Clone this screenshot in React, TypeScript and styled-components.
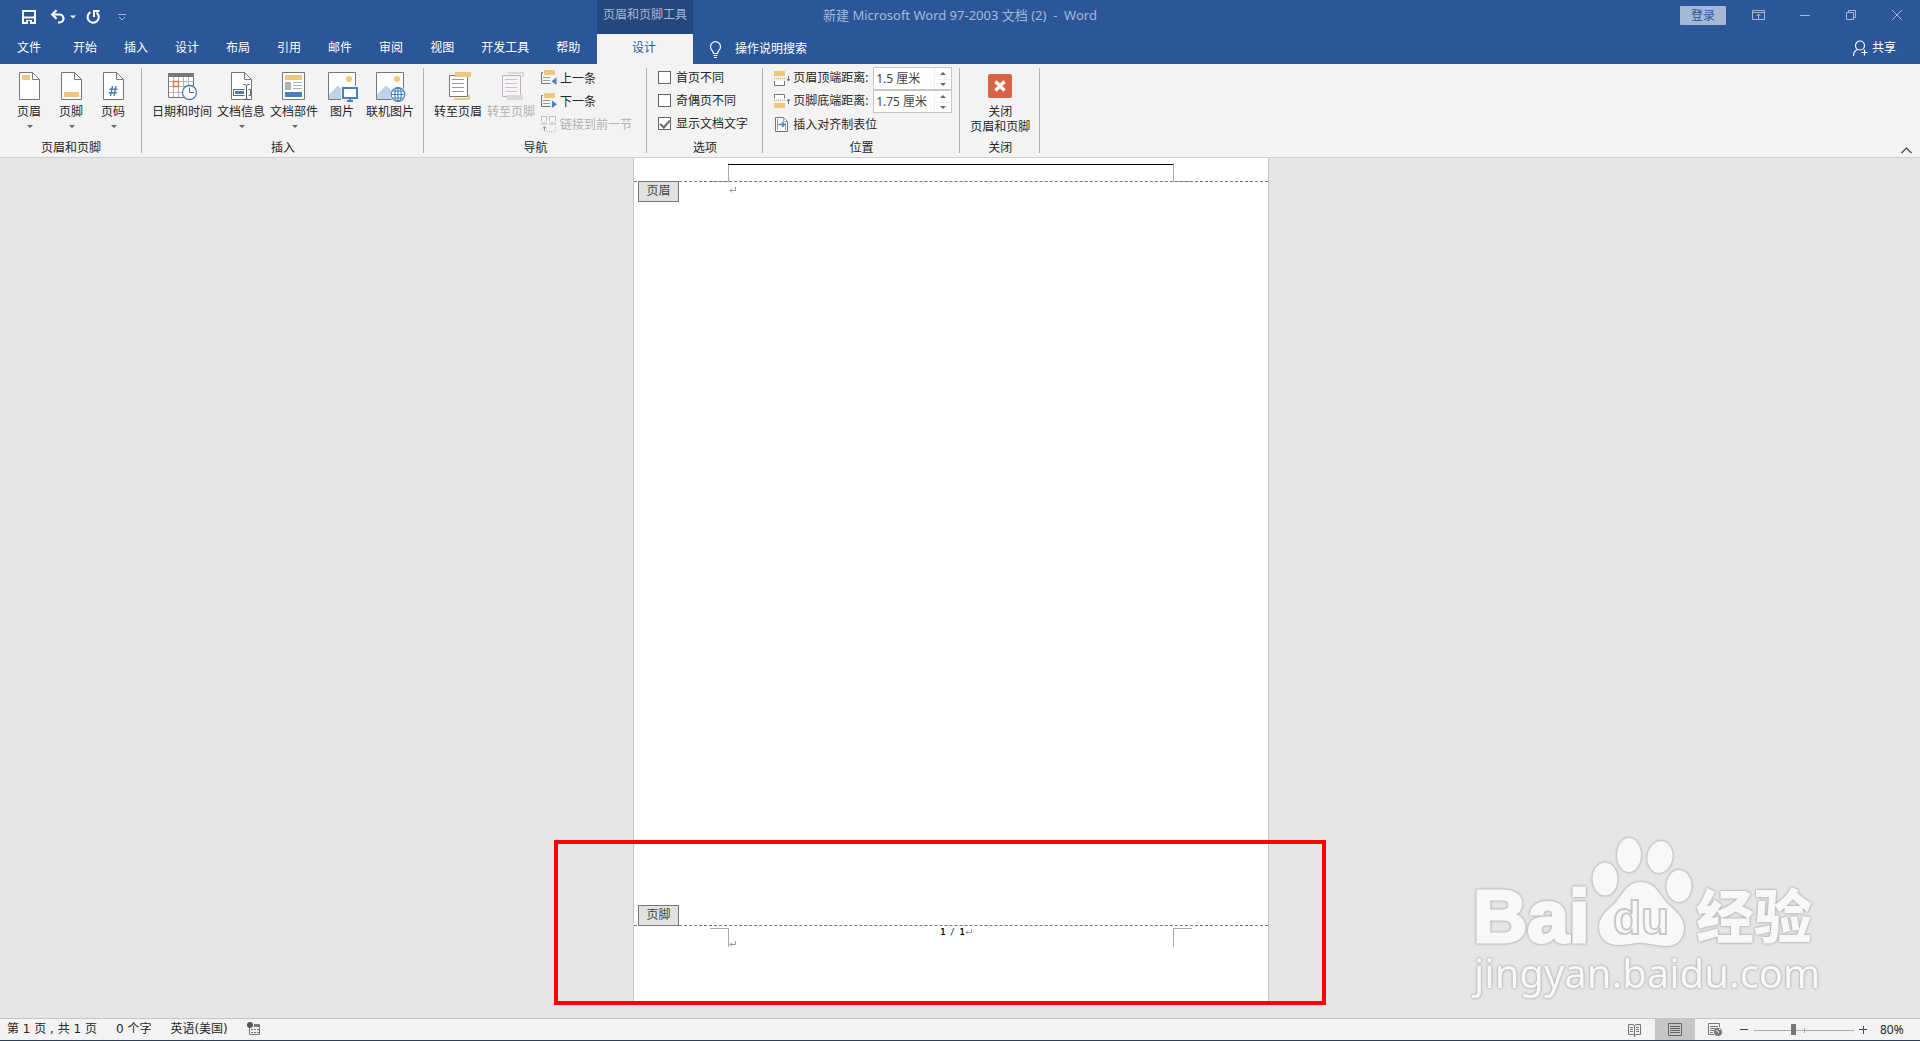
import React from 'react';
import styled, { createGlobalStyle } from 'styled-components';

const C = {
  blue: '#2b579a',
  blueDark: '#24477d',
  pale: '#a6b8d5',
  ribbon: '#f3f3f3',
  canvas: '#e6e6e6',
  line: '#c6c6c6',
  ink: '#262626',
  icon: '#777777',
  gold: '#edc77d',
  sky: '#4a80b8',
  off: '#b1b1b1',
};

const Global = createGlobalStyle`
  * { box-sizing: border-box; }
  html, body, #root { height: 100%; }
  body { margin: 0; overflow: hidden; }
  body, button, input {
    font-family: "Noto Sans", "Noto Sans CJK SC", sans-serif;
    font-size: 12px;
    line-height: 16px;
    color: ${C.ink};
  }
  button { border: 0; padding: 0; background: transparent; white-space: nowrap; }
  svg { display: block; flex: none; }
`;

const Shell = styled.div`
  height: 100vh;
  display: flex;
  flex-direction: column;
  background: ${C.canvas};
  border-bottom: 1px solid #2b4159;
  position: relative;
`;

/* ---------- title bar ---------- */
const TitleBar = styled.header`
  height: 34px;
  flex: none;
  background: ${C.blue};
  display: grid;
  grid-template-columns: 1fr auto 1fr;
`;
const TitleLeft = styled.div`
  display: flex;
`;
const QuickAccess = styled.div`
  flex: 0 0 597px;
  display: flex;
  align-items: center;
  padding-left: 21px;
`;
const QuickButton = styled.button<{ $after: number }>`
  margin-right: ${p => p.$after}px;
`;
const ContextTitle = styled.div`
  flex: 0 0 96px;
  background: ${C.blueDark};
  color: ${C.pale};
  text-align: center;
  padding-top: 7px;
`;
const DocTitle = styled.h1`
  margin: 0;
  padding-top: 7px;
  font-size: 13px;
  line-height: 16px;
  font-weight: 400;
  color: ${C.pale};
  white-space: pre;
`;
const TitleRight = styled.div`
  display: flex;
  justify-content: flex-end;
  align-items: flex-start;
`;
const Login = styled.button`
  width: 46px;
  height: 19px;
  margin: 6px 10px 0 0;
  border-radius: 1px;
  background: ${C.pale};
  color: ${C.blue};
`;
const WindowButton = styled.button`
  width: 46px;
  height: 30px;
  display: grid;
  place-items: center;
`;

/* ---------- tabs ---------- */
const TabRow = styled.nav`
  height: 30px;
  flex: none;
  background: ${C.blue};
  display: flex;
`;
const Tabs = styled.div`
  flex: 0 0 597px;
  display: flex;
`;
const Tab = styled.button<{ $wide?: boolean }>`
  padding: 0 ${p => (p.$wide ? 18 : 13)}px 2px ${p => (p.$wide ? 17 : 14)}px;
  color: #fff;
`;
const ActiveTab = styled.button`
  flex: 0 0 96px;
  padding: 0 2px 2px 0;
  background: ${C.ribbon};
  color: ${C.blue};
`;
const TellMe = styled.button`
  display: flex;
  align-items: center;
  gap: 13px;
  padding-left: 16px;
  color: #fff;
`;
const Share = styled.button`
  display: flex;
  align-items: center;
  gap: 4px;
  margin-left: auto;
  padding: 0 24px 2px 0;
  color: #fff;
`;

/* ---------- ribbon ---------- */
const Ribbon = styled.section`
  height: 94px;
  flex: none;
  display: flex;
  background: ${C.ribbon};
  border-bottom: 1px solid #d0d0d0;
`;
const Group = styled.div`
  display: flex;
  flex-direction: column;
  justify-content: space-between;
  padding: 3px 7px 1px 8px;
`;
const GroupBody = styled.div<{ $gap?: number }>`
  display: flex;
  gap: ${p => p.$gap ?? 0}px;
`;
const GroupName = styled.div`
  text-align: center;
`;
const Divider = styled.div`
  width: 1px;
  margin: 4px 0;
  background: #b1b1b1;
`;
const Big = styled.button`
  min-width: 42px;
  padding: 3px 2px 0;
  display: flex;
  flex-direction: column;
  align-items: center;
  line-height: 15px;
  &:disabled { color: ${C.off}; }
`;
const BigLabel = styled.span`
  margin-top: 2px;
`;
const BigCaret = styled.span`
  margin: 6px 0 0 2px;
  border: 3px solid transparent;
  border-top-color: #666;
  border-bottom: 0;
`;
const Column = styled.div`
  display: flex;
  flex-direction: column;
`;
const Small = styled.button`
  height: 23px;
  display: flex;
  align-items: center;
  gap: 2px;
  padding: 0 7px 0 3px;
  &:disabled { color: ${C.off}; }
`;
const Check = styled.label`
  height: 23px;
  display: flex;
  align-items: center;
  gap: 5px;
  padding: 0 7px 2px 3px;
`;
const CheckBox = styled.input`
  appearance: none;
  width: 13px;
  height: 13px;
  margin: 0;
  border: 1px solid #666;
  background: #fff;
  display: grid;
  place-items: center;
  &:checked::after {
    content: '';
    width: 4px;
    height: 8px;
    margin-bottom: 2px;
    border: solid #666;
    border-width: 0 2px 2px 0;
    transform: rotate(42deg);
  }
`;
const Measure = styled.div`
  height: 23px;
  display: flex;
  align-items: center;
  padding-left: 3px;
  gap: 2px;
`;
const MeasureLabel = styled.label`
  width: 78px;
  padding-bottom: 2px;
`;
const Spin = styled.div`
  width: 79px;
  height: 23px;
  display: flex;
  border: 1px solid ${C.line};
  background: #fff;
`;
const SpinInput = styled.input`
  flex: 1;
  min-width: 0;
  border: 0;
  padding: 0 0 0 2px;
  color: #444;
  background: transparent;
`;
const SpinButtons = styled.div`
  width: 17px;
  display: grid;
  grid-template-rows: 1fr 1fr;
  border-left: 1px solid #f0f0f0;
`;
const SpinButton = styled.button<{ $up?: boolean }>`
  display: grid;
  place-items: center;
  &::before {
    content: '';
    border: 3px solid transparent;
    ${p => (p.$up ? 'border-bottom-color: #666; border-top: 0;' : 'border-top-color: #666; border-bottom: 0;')}
  }
  & + & { border-top: 1px solid #f0f0f0; }
`;
const Collapse = styled.button`
  align-self: flex-end;
  margin: 0 8px 3px auto;
`;

/* ---------- document ---------- */
const Workspace = styled.main`
  flex: 1;
  min-height: 0;
  display: flex;
  justify-content: center;
  padding: 0 18px 16px 0;
`;
const Page = styled.article`
  position: relative;
  width: 636px;
  background: #fff;
  border: solid ${C.line};
  border-width: 0 1px;
  display: flex;
  flex-direction: column;
`;
const HeaderBand = styled.div`
  flex: none;
  display: grid;
  grid-template-columns: 95px 1fr 95px;
  height: 23px;
  padding-top: 5px;
`;
const Crop = styled.div<{ $side: 'left' | 'right'; $edge: 'top' | 'bottom' }>`
  width: 19px;
  height: 19px;
  justify-self: ${p => (p.$side === 'left' ? 'end' : 'start')};
  border: 0 solid #aaa;
  border-${p => p.$edge}-width: 1px;
  border-${p => (p.$side === 'left' ? 'right' : 'left')}-width: 1px;
`;
const HeaderRule = styled.div`
  height: 1px;
  margin: 1px -1px 0;
  background: #000;
`;
const Body = styled.div`
  flex: 1;
  display: flex;
  flex-direction: column;
  justify-content: space-between;
  border: dashed #777;
  border-width: 1px 0;
`;
const TagRow = styled.div`
  display: flex;
  gap: 50px;
  margin: -1px 0 -1px 4px;
`;
const Tag = styled.span`
  width: 41px;
  height: 21px;
  line-height: 18px;
  text-align: center;
  color: #444;
  background: #e1e1e1;
  border: 1px solid #777;
`;
const HeaderMark = styled.span`
  margin-top: 6px;
`;
const FooterBand = styled.div`
  flex: none;
  height: 76px;
  display: grid;
  grid-template-columns: 95px 1fr 95px;
  padding-top: 2px;
`;
const FooterText = styled.div`
  font: 8px/9px "DejaVu Sans Mono", "Noto Sans CJK SC", monospace;
  color: #000;
  display: flex;
  flex-direction: column;
  gap: 4px;
`;
const PageNumber = styled.p`
  margin: 0;
  display: flex;
  justify-content: center;
  align-items: center;
  padding-left: 10px;
  white-space: pre;
`;
const Highlight = styled.div`
  position: absolute;
  left: -80px;
  right: -58px;
  bottom: -3px;
  height: 165px;
  border: 4px solid #f00;
  pointer-events: none;
`;
const Watermark = styled.svg`
  position: absolute;
  right: 80px;
  bottom: 30px;
  filter: drop-shadow(0 0 1px #a8a8a8) drop-shadow(0 0 1px #c4c4c4);
  pointer-events: none;
`;

/* ---------- status bar ---------- */
const StatusBar = styled.footer`
  height: 22px;
  flex: none;
  display: flex;
  align-items: center;
  background: ${C.ribbon};
  border-top: 1px solid ${C.line};
`;
const StatusText = styled.button`
  padding: 0 12px 1px 7px;
  font-family: "DejaVu Sans", "Noto Sans CJK SC", sans-serif;
  white-space: pre;
`;
const StatusRight = styled.div`
  margin-left: auto;
  height: 100%;
  display: flex;
  align-items: center;
`;
const ViewButton = styled.button<{ $on?: boolean }>`
  width: 40px;
  height: 100%;
  display: grid;
  place-items: center;
  background: ${p => (p.$on ? C.line : 'transparent')};
`;
const ZoomButton = styled.button`
  width: 19px;
  display: grid;
  place-items: center;
`;
const ZoomRange = styled.input`
  appearance: none;
  width: 100px;
  height: 12px;
  margin: 0;
  background:
    linear-gradient(#aaa, #aaa) 50px 4px / 1px 5px no-repeat,
    linear-gradient(#aaa, #aaa) 0 6px / 100% 1px no-repeat;
  &::-webkit-slider-thumb {
    appearance: none;
    width: 5px;
    height: 11px;
    background: #777;
  }
`;
const ZoomValue = styled.button`
  width: 47px;
  padding-left: 7px;
  text-align: left;
`;

/* ---------- icons ---------- */
const Ico = ({ w, h = w, children, c = C.icon }: { w: number; h?: number; c?: string; children: React.ReactNode }) => (
  <svg width={w} height={h} viewBox={`0 0 ${w} ${h}`} fill="none" stroke={c} aria-hidden="true">{children}</svg>
);

const Sheet = () => (
  <>
    <path d="M6.5 2.5H19.5L26.5 9.5V29.5H6.5Z" fill="#fff" />
    <path d="M19.5 2.5V9.5H26.5" />
  </>
);
const HeaderIcon = () => <Ico w={32}><Sheet /><path d="M9 5h8v5H9z" fill={C.gold} stroke="none" /></Ico>;
const FooterIcon = () => <Ico w={32}><Sheet /><path d="M9 22h15v5H9z" fill={C.gold} stroke="none" /></Ico>;
const NumberIcon = () => (
  <Ico w={32}><Sheet /><path d="M15.5 16L13.5 26M19 16L17 26M12.5 19.2H20.5M11.8 22.8H19.8" stroke={C.sky} strokeWidth="1.4" /></Ico>
);
const DateIcon = () => (
  <Ico w={32}>
    <path d="M2.5 3.5h25v24h-25z" fill="#fff" />
    <path d="M2 3h26v4H2z" fill={C.icon} stroke="none" />
    <path d="M7.5 7v20M12.5 7v20M17.5 7v20M22.5 7v20M3 11.5h24M3 16.5h24M3 22.5h24" stroke="#b5b5b5" />
    <path d="M7.5 11.5h5v5h-5z" stroke="#e07b39" strokeWidth="1.4" fill="#fff" />
    <circle cx="23.5" cy="22.5" r="7" fill="#fff" stroke={C.sky} strokeWidth="1.3" />
    <path d="M23.5 17.5v5h4.5" stroke="#666" />
  </Ico>
);
const InfoIcon = () => (
  <Ico w={32}>
    <Sheet />
    <path d="M8.5 19.5h17v6h-17z" fill="#fff" stroke="#666" />
    <path d="M10 21h9v3h-9z" fill={C.sky} stroke="none" />
    <path d="M21.5 15v14" stroke="#fff" strokeWidth="4" />
    <path d="M21.5 15.5v13M18.5 14.5h1.5l1.5 1 1.5-1h1.5M18.5 29.5h1.5l1.5-1 1.5 1h1.5" stroke="#555" />
  </Ico>
);
const PartsIcon = () => (
  <Ico w={32}>
    <path d="M4.5 2.5h22v27h-22z" fill="#fff" />
    <g stroke="none"><path d="M7 5h17v5H7z" fill={C.gold} /><path d="M7 12h6v8H7z" fill="#b1b1b1" /><path d="M7 22h17v5H7z" fill={C.sky} /></g>
    <path d="M15 12.5h9M15 15.5h9M15 18.5h9" stroke="#b1b1b1" />
  </Ico>
);
const Photo = () => (
  <>
    <path d="M2.5 2.5h27v27h-27z" fill="#fff" />
    <circle cx="23" cy="9" r="3" fill={C.gold} stroke="none" />
    <path d="M3 29V24.5L12 15.5 26 29Z" fill="#bfd2e8" stroke="none" />
  </>
);
const PictureIcon = () => (
  <Ico w={32}>
    <Photo />
    <path d="M15 16h17v16h-17z" fill={C.ribbon} stroke="none" />
    <path d="M17 18h14v10H17z" fill="#fff" stroke={C.sky} strokeWidth="2" />
    <path d="M24 28v3M21 31h6" stroke={C.sky} strokeWidth="2" />
  </Ico>
);
const OnlineIcon = () => (
  <Ico w={32}>
    <Photo />
    <circle cx="24" cy="24.5" r="8" fill={C.ribbon} stroke="none" />
    <g stroke={C.sky} strokeWidth="1.2">
      <circle cx="24" cy="24.5" r="6.8" fill="#fff" />
      <ellipse cx="24" cy="24.5" rx="3.2" ry="6.8" />
      <path d="M24 18v13M17.5 24.5h13M18.5 21h11M18.5 28h11" />
    </g>
  </Ico>
);
const GoIcon = ({ footer }: { footer?: boolean }) => {
  const tint = footer ? '#dbd9db' : C.gold;
  return (
    <Ico w={32} c={footer ? '#b9b4b9' : C.icon}>
      <path d="M7.5 5.5h18v21h-18z" fill={footer ? '#f8f2f9' : '#fff'} />
      <path d="M10 9.5h12M10 13.5h12M10 17.5h12M10 21.5h12" stroke={footer ? '#c9c4c9' : '#999'} />
      {footer ? (
        <g stroke="none" fill={tint}><path d="M13 2h16v5h-2V4H13z" /><path d="M12 25h16v5H12z" /></g>
      ) : (
        <g stroke="none" fill={tint}><path d="M13 2h16v5H13z" /><path d="M12 28h14v-3h2v5H12z" /></g>
      )}
    </Ico>
  );
};
const StepIcon = ({ next }: { next?: boolean }) => (
  <Ico w={17}>
    <path d="M2 2.5H0.5V13.5H9.5" />
    <path d="M2 7.5h7M2 10.5h7" stroke="#999" />
    <path d="M3 0h11v5H3z" fill={C.gold} stroke="none" />
    <path d={next ? 'M11 7.5V15L16 11.2Z' : 'M15.5 7.5V15L10.5 11.2Z'} fill={C.sky} stroke="none" />
  </Ico>
);
const LinkIcon = () => (
  <Ico w={17} c="#bcbcbc">
    <path d="M.5 5V.5h5V5M8.5 5V.5h6V5" fill="#f8f2f9" />
    <path d="M0 6h6v3H0zM8 6h7v3H8z" fill="#d8d8d8" stroke="none" />
    <path d="M3.5 15v-4M1.5 12.5l2-2 2 2" stroke="#999" />
    <path d="M4 15.5h11M14.5 11v4" strokeDasharray="1 1" />
  </Ico>
);
const TopIcon = () => (
  <Ico w={17}>
    <path d="M0 1h11v5H0z" fill={C.gold} stroke="none" />
    <path d="M0 8.5h11" stroke="#e0a65c" strokeDasharray="1 1" />
    <path d="M.5 11v4.5h10V11" fill="#fff" />
    <path d="M14.5 6v5M13 9l1.5 2 1.5-2" stroke={C.sky} />
  </Ico>
);
const BottomIcon = () => (
  <Ico w={17}>
    <path d="M.5 5.5V1.5h10V5.5" fill="#fff" />
    <path d="M0 7.5h11" stroke="#e0a65c" strokeDasharray="1 1" />
    <path d="M0 10h11v5H0z" fill={C.gold} stroke="none" />
    <path d="M14.5 11V6M13 8l1.5-2 1.5 2" stroke={C.sky} />
  </Ico>
);
const AlignIcon = () => (
  <Ico w={17}>
    <path d="M1.5 1.5h8l4 4v10h-12z" fill="#fff" />
    <path d="M9.5 1.5v4h4M3.5 3v11M11.5 7v7" stroke="#999" />
    <path d="M4.5 8.5h6M8 6l2.5 2.5L8 11" stroke={C.sky} strokeWidth="1.4" />
  </Ico>
);
const CloseIcon = () => (
  <Ico w={32}>
    <rect x="4" y="4" width="24" height="24" rx="2" fill="#d86344" stroke="none" />
    <path d="M11.5 11.5l9 9M20.5 11.5l-9 9" stroke="#fff" strokeWidth="3.2" />
  </Ico>
);
const ReturnMark = () => (
  <Ico w={7} c="#999"><path d="M6.5 0v3.5H1M3 1.5l-2 2 2 2" /></Ico>
);

const tabs = ['开始', '插入', '设计', '布局', '引用', '邮件', '审阅', '视图', '开发工具', '帮助'];

const BigButton = ({ icon, label, menu, disabled }: { icon: React.ReactNode; label: React.ReactNode; menu?: boolean; disabled?: boolean }) => (
  <Big disabled={disabled}>{icon}<BigLabel>{label}</BigLabel>{menu && <BigCaret />}</Big>
);

const Distance = ({ id, icon, label, value }: { id: string; icon: React.ReactNode; label: string; value: string }) => (
  <Measure>
    {icon}
    <MeasureLabel htmlFor={id}>{label}</MeasureLabel>
    <Spin>
      <SpinInput id={id} defaultValue={value} />
      <SpinButtons><SpinButton $up aria-label="增加" /><SpinButton aria-label="减少" /></SpinButtons>
    </Spin>
  </Measure>
);

export default function App() {
  return (
    <Shell>
      <Global />
      <TitleBar>
        <TitleLeft>
          <QuickAccess>
            <QuickButton $after={13} aria-label="保存">
              <Ico w={16} c="#fff"><path d="M2 2h12v12H2z" strokeWidth="2" /><path d="M3 8.5h10" strokeWidth="2" /><path d="M5 11h6v4H5z" fill="#fff" stroke="none" /><path d="M7 12h2v3H7z" fill={C.blue} stroke="none" /></Ico>
            </QuickButton>
            <QuickButton $after={4} aria-label="撤消">
              <Ico w={16} c="#fff"><path d="M2.5 5.5H9.5a4 4 0 0 1 0 8H8" strokeWidth="2.2" /><path d="M6.5 1.2L2.2 5.5 6.5 9.8" strokeWidth="2.2" /></Ico>
            </QuickButton>
            <QuickButton $after={9} aria-label="撤消选项">
              <Ico w={6}><path d="M0 1.5h6L3 4.5z" fill="#fff" stroke="none" /></Ico>
            </QuickButton>
            <QuickButton $after={17} aria-label="重复">
              <Ico w={16} c="#fff"><path d="M5.5 3.2A5.6 5.6 0 1 0 11.5 3.6" strokeWidth="2" /><path d="M9 8V2h5.5" strokeWidth="2" /></Ico>
            </QuickButton>
            <QuickButton $after={0} aria-label="自定义快速访问工具栏">
              <Ico w={8} c={C.pale}><path d="M0 1.5h8M1 4l3 3 3-3" /></Ico>
            </QuickButton>
          </QuickAccess>
          <ContextTitle>页眉和页脚工具</ContextTitle>
        </TitleLeft>
        <DocTitle>{'新建 Microsoft Word 97-2003 文档 (2)  -  Word'}</DocTitle>
        <TitleRight>
          <Login>登录</Login>
          <WindowButton aria-label="功能区显示选项">
            <Ico w={14} h={12} c={C.pale}><path d="M.5 1.5h12v9H.5zM.5 3.5h12M6.5 10V5M4.5 7l2-2 2 2" /></Ico>
          </WindowButton>
          <WindowButton aria-label="最小化"><Ico w={10} c={C.pale}><path d="M0 5.5h10" /></Ico></WindowButton>
          <WindowButton aria-label="还原"><Ico w={10} c={C.pale}><path d="M.5 2.5h7v7h-7zM2.5 2.5v-2h7v7h-2" /></Ico></WindowButton>
          <WindowButton aria-label="关闭"><Ico w={10} c={C.pale}><path d="M0 0l10 10M10 0L0 10" /></Ico></WindowButton>
        </TitleRight>
      </TitleBar>

      <TabRow>
        <Tabs>
          <Tab $wide>文件</Tab>
          {tabs.map(t => <Tab key={t}>{t}</Tab>)}
        </Tabs>
        <ActiveTab>设计</ActiveTab>
        <TellMe>
          <Ico w={13} h={17} c="#fff"><path d="M4.5 12.5c0-2.5-3-3.5-3-6.8a5 5 0 0 1 10 0c0 3.300-3 4.300-3 6.800zM4.5 14.5h4M5 16.5h3" strokeWidth="1.2" /></Ico>
          操作说明搜索
        </TellMe>
        <Share>
          <Ico w={15} h={17} c="#fff"><circle cx="7" cy="5.5" r="4.5" strokeWidth="1.2" /><path d="M.5 16c0-3.5 2-6 4.5-6.5M8.5 12.5h6M11.5 9.5v6" strokeWidth="1.2" /></Ico>
          共享
        </Share>
      </TabRow>

      <Ribbon>
        <Group>
          <GroupBody>
            <BigButton icon={<HeaderIcon />} label="页眉" menu />
            <BigButton icon={<FooterIcon />} label="页脚" menu />
            <BigButton icon={<NumberIcon />} label="页码" menu />
          </GroupBody>
          <GroupName>页眉和页脚</GroupName>
        </Group>
        <Divider />
        <Group>
          <GroupBody $gap={1}>
            <BigButton icon={<DateIcon />} label="日期和时间" />
            <BigButton icon={<InfoIcon />} label="文档信息" menu />
            <BigButton icon={<PartsIcon />} label="文档部件" menu />
            <BigButton icon={<PictureIcon />} label="图片" />
            <BigButton icon={<OnlineIcon />} label="联机图片" />
          </GroupBody>
          <GroupName>插入</GroupName>
        </Group>
        <Divider />
        <Group>
          <GroupBody $gap={1}>
            <BigButton icon={<GoIcon />} label="转至页眉" />
            <BigButton icon={<GoIcon footer />} label="转至页脚" disabled />
            <Column>
              <Small><StepIcon />上一条</Small>
              <Small><StepIcon next />下一条</Small>
              <Small disabled><LinkIcon />链接到前一节</Small>
            </Column>
          </GroupBody>
          <GroupName>导航</GroupName>
        </Group>
        <Divider />
        <Group>
          <Column>
            <Check><CheckBox type="checkbox" />首页不同</Check>
            <Check><CheckBox type="checkbox" />奇偶页不同</Check>
            <Check><CheckBox type="checkbox" defaultChecked />显示文档文字</Check>
          </Column>
          <GroupName>选项</GroupName>
        </Group>
        <Divider />
        <Group>
          <Column>
            <Distance id="top" icon={<TopIcon />} label="页眉顶端距离:" value="1.5 厘米" />
            <Distance id="bottom" icon={<BottomIcon />} label="页脚底端距离:" value="1.75 厘米" />
            <Small><AlignIcon />插入对齐制表位</Small>
          </Column>
          <GroupName>位置</GroupName>
        </Group>
        <Divider />
        <Group>
          <GroupBody>
            <BigButton icon={<CloseIcon />} label={<>关闭<br />页眉和页脚</>} />
          </GroupBody>
          <GroupName>关闭</GroupName>
        </Group>
        <Divider />
        <Collapse aria-label="折叠功能区"><Ico w={11} h={7} c="#444"><path d="M.5 6l5-5 5 5" strokeWidth="1.2" /></Ico></Collapse>
      </Ribbon>

      <Workspace>
        <Page>
          <HeaderBand>
            <Crop $side="left" $edge="bottom" />
            <HeaderRule />
            <Crop $side="right" $edge="bottom" />
          </HeaderBand>
          <Body>
            <TagRow><Tag>页眉</Tag><HeaderMark><ReturnMark /></HeaderMark></TagRow>
            <TagRow><Tag>页脚</Tag></TagRow>
          </Body>
          <FooterBand>
            <Crop $side="left" $edge="top" />
            <FooterText>
              <PageNumber><b>1</b>{' / '}<b>1</b><ReturnMark /></PageNumber>
              <ReturnMark />
            </FooterText>
            <Crop $side="right" $edge="top" />
          </FooterBand>
          <Highlight />
        </Page>
      </Workspace>

      <StatusBar>
        <StatusText>第 1 页 , 共 1 页</StatusText>
        <StatusText>0 个字</StatusText>
        <StatusText>英语(美国)</StatusText>
        <StatusText aria-label="宏录制">
          <Ico w={14}><path d="M2.5 5v7.5h10v-10H7" /><path d="M7 3h6v2H7z" fill={C.icon} stroke="none" /><path d="M4 7.5h8M4 10.5h8" strokeDasharray="2 1" /><circle cx="3" cy="3" r="3" fill="#555" stroke="none" /></Ico>
        </StatusText>
        <StatusRight>
          <ViewButton aria-label="阅读视图">
            <Ico w={14}><path d="M6.5 2.5L5 1.5H.5v10H5l1.5 1 1.5-1h4.5v-10H8zM6.5 2v12M2 4.5h3M2 6.5h3M2 8.5h3M8 4.5h3M8 6.5h3M8 8.5h3" /></Ico>
          </ViewButton>
          <ViewButton $on aria-label="页面视图">
            <Ico w={14} c="#666"><path d="M.5.5h13v12H.5zM2 3.5h10M2 5.5h10M2 7.5h10M2 9.5h10" /></Ico>
          </ViewButton>
          <ViewButton aria-label="Web 版式视图">
            <Ico w={14}><path d="M11.5 4V.5H.5v11H6M2 3.5h8M2 5.5h6M2 7.5h4M2 9.5h3" /><circle cx="10" cy="9" r="4" fill={C.icon} stroke="none" /><path d="M8 7.5l2 .5 .5 2M11 6l1.5 1.5" stroke="#eee" /></Ico>
          </ViewButton>
          <ZoomButton aria-label="缩小"><Ico w={9} c="#444"><path d="M0 4.5h8" /></Ico></ZoomButton>
          <ZoomRange type="range" min={0} max={100} defaultValue={39} aria-label="缩放" />
          <ZoomButton aria-label="放大"><Ico w={9} c="#444"><path d="M0 4.5h8M4.500 1v8" /></Ico></ZoomButton>
          <ZoomValue>80%</ZoomValue>
        </StatusRight>
      </StatusBar>

      <Watermark width="400" height="190" viewBox="0 0 400 190" fill="#f8f8f8">
        <text x="33" y="122" fontFamily="Liberation Sans, sans-serif" fontWeight="700" fontSize="75" stroke="#f8f8f8" strokeWidth="3">Bai</text>
        <ellipse cx="165" cy="59" rx="12.5" ry="16.5" />
        <ellipse cx="189" cy="35" rx="12" ry="17" />
        <ellipse cx="220" cy="37" rx="12.5" ry="16" transform="rotate(10 220 37)" />
        <ellipse cx="239" cy="66" rx="12.5" ry="16" />
        <path d="M201 62c-16 0-19 16-29 24-8 7-13 13-13 21 0 11 8 18 19 18 9 0 14-2 23-2s15 3 25 3c12 0 18-8 18-18 0-9-6-15-14-22-10-9-14-24-29-24z" />
        <text x="173" y="114" fontFamily="Liberation Sans, sans-serif" fontWeight="700" fontSize="46" fill="#f8f8f8" stroke="#c8c8c8" strokeWidth="2">du</text>
        <text x="256" y="118" fontFamily="Noto Sans CJK SC, sans-serif" fontWeight="900" fontSize="58">经验</text>
        <text x="34" y="168" fontFamily="Noto Sans, sans-serif" fontSize="40">jingyan.baidu.com</text>
      </Watermark>
    </Shell>
  );
}
